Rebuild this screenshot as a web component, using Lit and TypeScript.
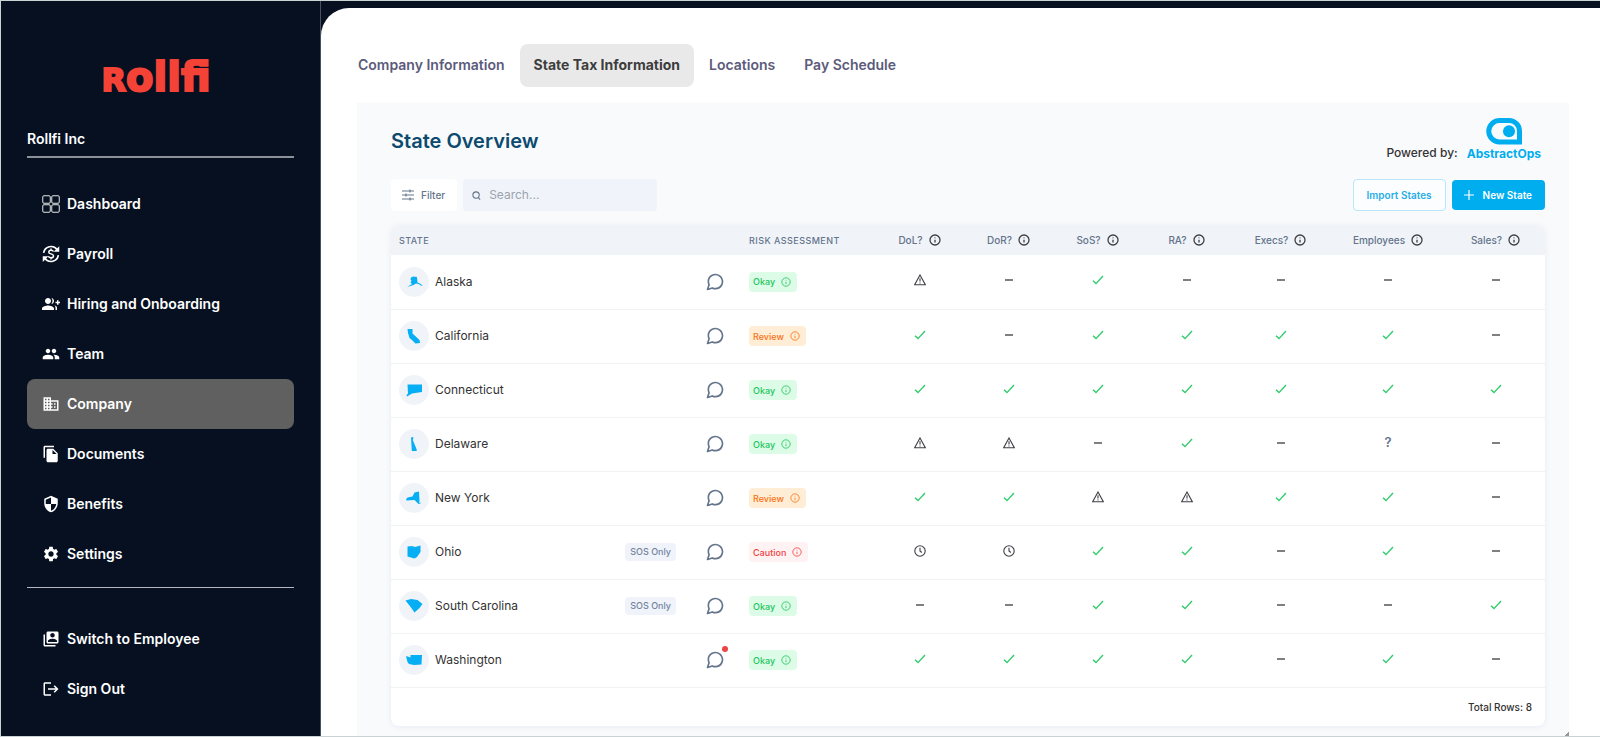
import { LitElement, html, css, svg, nothing } from "lit";
import { customElement, state } from "lit/decorators.js";

type Mark = "ok" | "none" | "warn" | "clock" | "unknown";
type Risk = "Okay" | "Review" | "Caution";

interface StateRow {
  name: string;
  shape: string;
  risk: Risk;
  marks: Mark[];
  sosOnly?: boolean;
  unread?: boolean;
}

const CODES: Record<string, Mark> = { v: "ok", "-": "none", w: "warn", c: "clock", "?": "unknown" };
const marks = (text: string): Mark[] => [...text].map((c) => CODES[c]);

/* Outlines are drawn on a 30 x 30 grid, the size of the round badge. */
const ROWS: StateRow[] = [
  { name: "Alaska", shape: "M12 10.5 14 9.5 18 10 18.5 15.5 21 16.5 23.500 18.500 23 19 19.500 17 17 16.500 14.500 18 8 20 13 17 11.500 15.500 12.500 13.500 11.500 12.500Z", risk: "Okay", marks: marks("w-v----") },
  { name: "California", shape: "M8.5 8 13.5 8 13.5 12.5 20.5 19 21 22 16.5 22.5 13.5 19.5 10.5 17 9 12Z", risk: "Review", marks: marks("v-vvvv-") },
  { name: "Connecticut", shape: "M8.5 9.5 23 9.5 23 17 13 18.5 8 21.5 7.5 20 9 18.5Z", risk: "Okay", marks: marks("vvvvvvv") },
  { name: "Delaware", shape: "M12 8.5 14.5 8 13.8 11 17.5 20 17.8 22 12.8 22Z", risk: "Okay", marks: marks("ww-v-?-") },
  { name: "New York", shape: "M7 16.5 8.5 14.5 13.5 13.5 15.5 9.5 20 8.5 20.5 18 20 19.5 22.5 20 19.5 21 15.5 17 7.5 17.5Z", risk: "Review", marks: marks("vvwwvv-") },
  { name: "Ohio", shape: "M8.5 9.5 13 9 16 10 21.5 8.5 21.5 15 18 20 15.5 21.5 8.5 19.5Z", risk: "Caution", marks: marks("ccvv-v-"), sosOnly: true },
  { name: "South Carolina", shape: "M6.5 9.5 12 8 18.5 9 23.5 13 20.5 17 15.5 21.5 12 16.5Z", risk: "Okay", marks: marks("--vv--v"), sosOnly: true },
  { name: "Washington", shape: "M7 11 11.5 12.5 11.5 10 23 10 22.5 19.5 15 20 10 19 8.5 17Z", risk: "Okay", marks: marks("vvvv-v-"), unread: true },
];

const COLUMNS = ["DoL?", "DoR?", "SoS?", "RA?", "Execs?", "Employees", "Sales?"];

const NAV_ICONS: Record<string, unknown> = {
  Dashboard: svg`<g fill="none" stroke="currentColor" stroke-width="1.2"><rect x="1" y="1" width="10" height="10" rx="1.5"/><rect x="13" y="1" width="10" height="10" rx="1.5"/><rect x="1" y="13" width="10" height="10" rx="1.5"/><rect x="13" y="13" width="10" height="10" rx="1.5"/></g>`,
  Payroll: svg`<g fill="none" stroke="currentColor" stroke-width="2.2"><path d="M2.2 10.5A10 10 0 0 1 20 6M21.8 13.500A10 10 0 0 1 4 18"/><path d="M15.300 8.800C14.800 7.600 13.500 7 12 7 10.200 7 9 8 9 9.500c0 3.200 6.300 1.600 6.300 5 0 1.500-1.300 2.500-3.300 2.500-1.700 0-3-.7-3.500-2M12 4.800V7M12 17v2.200" stroke-width="1.900"/></g><path d="M23 1.500V9h-7.500zM1 22.500V15h7.500z"/>`,
  "Hiring and Onboarding": svg`<path d="M22 9V7h-2v2h-2v2h2v2h2v-2h2V9zM8 12c2.210 0 4-1.790 4-4s-1.790-4-4-4-4 1.790-4 4 1.790 4 4 4zm0 2c-2.670 0-8 1.340-8 4v2h16v-2c0-2.660-5.330-4-8-4zm4.510-9.950C13.430 5.110 14 6.490 14 8s-.57 2.890-1.490 3.950C14.470 11.700 16 10.040 16 8s-1.530-3.700-3.490-3.950zm4.020 9.780C17.420 14.660 18 15.700 18 17v3h2v-3c0-1.450-1.590-2.510-3.470-3.170z"/>`,
  Team: svg`<path d="M16 11c1.660 0 2.990-1.340 2.990-3S17.660 5 16 5c-1.660 0-3 1.340-3 3s1.340 3 3 3zm-8 0c1.660 0 2.990-1.340 2.990-3S9.660 5 8 5C6.340 5 5 6.340 5 8s1.340 3 3 3zm0 2c-2.330 0-7 1.170-7 3.500V19h14v-2.500c0-2.330-4.670-3.500-7-3.500zm8 0c-.29 0-.62.02-.97.05 1.160.84 1.970 1.970 1.970 3.450V19h6v-2.500c0-2.330-4.670-3.500-7-3.500z"/>`,
  Company: svg`<path d="M12 7V3H2v18h20V7H12zM6 19H4v-2h2v2zm0-4H4v-2h2v2zm0-4H4V9h2v2zm0-4H4V5h2v2zm4 12H8v-2h2v2zm0-4H8v-2h2v2zm0-4H8V9h2v2zm0-4H8V5h2v2zm10 12h-8v-2h2v-2h-2v-2h2v-2h-2V9h8v10zm-2-8h-2v2h2v-2zm0 4h-2v2h2v-2z"/>`,
  Documents: svg`<path d="M16 1H4c-1.100 0-2 .9-2 2v14h2V3h12V1zm-1 4l6 6v10c0 1.100-.9 2-2 2H7.990C6.890 23 6 22.100 6 21l.01-14c0-1.100.89-2 1.990-2h7zm-1 7h5.500L14 6.500V12z"/>`,
  Benefits: svg`<path d="M12 1L3 5v6c0 5.550 3.840 10.740 9 12 5.160-1.260 9-6.450 9-12V5l-9-4zm0 10.990h7c-.53 4.120-3.280 7.790-7 8.940V12H5V6.300l7-3.110v8.800z"/>`,
  Settings: svg`<path d="M19.140 12.940c.04-.3.06-.61.06-.94 0-.32-.02-.64-.07-.94l2.030-1.580c.18-.14.23-.41.12-.61l-1.920-3.320c-.12-.22-.37-.29-.59-.22l-2.390.96c-.5-.38-1.030-.7-1.620-.94l-.36-2.540c-.04-.24-.24-.41-.48-.41h-3.840c-.24 0-.43.17-.47.41l-.36 2.540c-.59.24-1.130.57-1.620.94l-2.390-.96c-.22-.08-.47 0-.59.22L2.740 8.870c-.12.21-.08.47.12.61l2.030 1.580c-.05.3-.09.63-.09.94s.02.64.07.94l-2.030 1.580c-.18.14-.23.41-.12.61l1.920 3.320c.12.22.37.29.59.22l2.390-.96c.5.38 1.030.7 1.620.94l.36 2.540c.05.24.24.41.48.41h3.840c.24 0 .44-.17.47-.41l.36-2.540c.59-.24 1.130-.56 1.620-.94l2.390.96c.22.08.47 0 .59-.22l1.920-3.320c.12-.22.07-.47-.12-.61l-2.010-1.580zM12 15.600c-1.980 0-3.600-1.620-3.600-3.600s1.620-3.600 3.600-3.600 3.600 1.620 3.600 3.600-1.620 3.600-3.600 3.600z"/>`,
  "Switch to Employee": svg`<path d="M4 6H2v14c0 1.100.9 2 2 2h14v-2H4V6zM20 2H8c-1.100 0-2 .9-2 2v12c0 1.100.9 2 2 2h12c1.100 0 2-.9 2-2V4c0-1.100-.9-2-2-2zm-6 2c1.660 0 3 1.340 3 3s-1.340 3-3 3-3-1.340-3-3 1.340-3 3-3zm6 12H8v-1.500c0-1.990 4-3 6-3s6 1.010 6 3V16z"/>`,
  "Sign Out": svg`<path d="M17 7l-1.410 1.410L18.170 11H8v2h10.170l-2.580 2.580L17 17l5-5zM4 5h8V3H4c-1.100 0-2 .9-2 2v14c0 1.100.9 2 2 2h8v-2H4V5z"/>`,
};

const MAIN_NAV = ["Dashboard", "Payroll", "Hiring and Onboarding", "Team", "Company", "Documents", "Benefits", "Settings"];
const ACCOUNT_NAV = ["Switch to Employee", "Sign Out"];
const TABS = ["Company Information", "State Tax Information", "Locations", "Pay Schedule"];

const infoIcon = html`<svg class="info" viewBox="0 0 24 24" aria-hidden="true"><circle cx="12" cy="12" r="10"/><path d="M12 11.500V17M12 7v1.500"/></svg>`;

const MARKS: Record<Mark, unknown> = {
  ok: html`<svg class="mark ok" viewBox="0 0 12 12" role="img" aria-label="Yes"><path d="M1 6.800 4 9.600 11 2"/></svg>`,
  none: html`<svg class="mark none" viewBox="0 0 12 12" role="img" aria-label="None"><path d="M2 6H10"/></svg>`,
  warn: html`<svg class="mark warn" viewBox="0 0 12 12" role="img" aria-label="Warning"><path d="M6 1 11.300 10.700H.7ZM6 4.300V7.400M6 8.400V9.400"/></svg>`,
  clock: html`<svg class="mark warn" viewBox="0 0 12 12" role="img" aria-label="Pending"><circle cx="6" cy="6" r="5.200"/><path d="M6 2.800V6L7.800 7.500"/></svg>`,
  unknown: html`<span class="unknown">?</span>`,
};

@customElement("side-nav")
class SideNav extends LitElement {
  @state() private active = "Company";

  static styles = css`
    :host {
      display: block;
      box-sizing: border-box;
      padding: 0 26px;
      color: #fff;
      border-right: 1px solid #4a515e;
      font-family: Inter, "Liberation Sans", sans-serif;
    }
    .logo {
      margin: 0;
      padding: 54px 9px 27px 0;
      text-align: center;
      font: 700 40px/44px "DejaVu Sans", sans-serif;
      color: #f44336;
      -webkit-text-stroke: 2px #f44336;
    }
    .logo .cap { font-size: 32px; }
    .company {
      margin: 0;
      padding-bottom: 7px;
      font-size: 14px;
      line-height: 20px;
      font-weight: 600;
      border-bottom: 2px solid #8b9099;
    }
    ul { list-style: none; margin: 0; padding: 21px 0 8px; }
    ul + ul { border-top: 1px solid #b4b8be; padding-top: 26px; }
    a {
      display: flex;
      align-items: center;
      gap: 7px;
      height: 50px;
      padding: 0 15px;
      border-radius: 8px;
      color: inherit;
      text-decoration: none;
      font-size: 14px;
      line-height: 20px;
      font-weight: 600;
    }
    a.active { background: #606060; }
    svg { width: 18px; height: 18px; fill: currentColor; flex: none; }
  `;

  private item(name: string) {
    return html`<li>
      <a href="#" class=${name === this.active ? "active" : ""} @click=${() => (this.active = name)}>
        <svg viewBox="0 0 24 24" aria-hidden="true">${NAV_ICONS[name]}</svg>${name}
      </a>
    </li>`;
  }

  render() {
    return html`
      <p class="logo"><span class="cap">R</span>ollfi</p>
      <p class="company">Rollfi Inc</p>
      <ul>${MAIN_NAV.map((n) => this.item(n))}</ul>
      <ul>${ACCOUNT_NAV.map((n) => this.item(n))}</ul>
    `;
  }
}

@customElement("state-table")
class StateTable extends LitElement {
  static styles = css`
    :host {
      display: block;
      border-radius: 8px;
      overflow: hidden;
      background: #fff;
      box-shadow: 0 1px 6px #e6ebf2;
    }
    table { width: 100%; table-layout: fixed; border-collapse: collapse; }
    .c-risk { width: 134px; }
    .c-mark { width: 89px; }
    .c-wide { width: 99px; }
    .c-widest { width: 116px; }
    th, td { box-sizing: border-box; }
    th {
      height: 30px;
      padding: 0;
      background: #f0f3f8;
      color: #64748b;
      font-size: 10px;
      font-weight: 500;
    }
    th.label {
      padding: 0 8px;
      text-align: left;
      font-size: 9px;
      letter-spacing: 0.05em;
      text-transform: uppercase;
    }
    .head { display: flex; align-items: center; justify-content: center; gap: 6px; }
    .info { width: 12px; height: 12px; flex: none; fill: none; stroke: currentColor; stroke-width: 2; }
    .head .info { color: #3f3f46; stroke-width: 2.600; }
    td { height: 54px; padding: 0 8px; border-bottom: 1px solid #f0f2f6; }
    .state { display: flex; align-items: center; padding-right: 8px; }
    .badge { width: 30px; height: 30px; border-radius: 50%; background: #f0f4f9; fill: #06aef4; }
    .name { flex: 1; margin-left: 6px; font-size: 12px; line-height: 20px; color: #333; }
    .sos {
      padding: 0 5px;
      border-radius: 4px;
      background: #f0f3f9;
      color: #7384a0;
      font-size: 9px;
      line-height: 18px;
      font-weight: 500;
    }
    .chat {
      position: relative;
      display: flex;
      margin-left: 29px;
      padding: 0;
      border: 0;
      background: none;
      color: #64748b;
    }
    .chat svg { width: 20px; height: 20px; fill: none; stroke: currentColor; stroke-width: 2; stroke-linejoin: round; }
    .dot {
      position: absolute;
      top: -4px;
      right: -3px;
      width: 6px;
      height: 6px;
      border-radius: 50%;
      background: #ef4444;
    }
    .risk {
      display: flex;
      align-items: center;
      gap: 6px;
      width: fit-content;
      height: 20px;
      padding: 0 6px 0 4px;
      border-radius: 4px;
      font-size: 9px;
      font-weight: 500;
    }
    .risk .info { width: 10px; height: 10px; }
    .Okay { background: #dcfce7; color: #22c55e; }
    .Review { background: #ffedd5; color: #f97316; }
    .Caution { background: #fef2f2; color: #ef4444; }
    td.value { padding: 0 0 6px; text-align: center; }
    .mark { width: 12px; height: 12px; vertical-align: middle; fill: none; stroke-width: 1.400; }
    .ok { stroke: #2fcb6c; }
    .none { stroke: #808080; stroke-width: 2; }
    .warn { stroke: #3f3f46; stroke-width: 1.100; }
    .unknown { color: #64748b; font-size: 13px; line-height: 20px; font-weight: 600; }
    td.total { height: 39px; border: 0; padding: 0 13px; text-align: right; font-size: 10px; font-weight: 500; color: #333; }
  `;

  render() {
    return html`
      <table>
        <colgroup>
          <col />
          <col class="c-risk" />
          <col class="c-mark" span="4" />
          <col class="c-wide" />
          <col class="c-widest" />
          <col class="c-wide" />
        </colgroup>
        <thead>
          <tr>
            <th class="label" scope="col">State</th>
            <th class="label" scope="col">Risk Assessment</th>
            ${COLUMNS.map((c) => html`<th scope="col"><span class="head">${c}${infoIcon}</span></th>`)}
          </tr>
        </thead>
        <tbody>
          ${ROWS.map(
            (r) => html`<tr>
              <td>
                <div class="state">
                  <svg class="badge" viewBox="0 0 30 30" aria-hidden="true"><path d=${r.shape} /></svg>
                  <span class="name">${r.name}</span>
                  ${r.sosOnly ? html`<span class="sos">SOS Only</span>` : nothing}
                  <button class="chat" aria-label="Comments">
                    <svg viewBox="0 0 24 24"><path d="M21 11.500a8.380 8.380 0 0 1-.9 3.800 8.500 8.500 0 0 1-7.600 4.700 8.380 8.380 0 0 1-3.800-.9L3 21l1.900-5.700a8.380 8.380 0 0 1-.9-3.800 8.500 8.500 0 0 1 4.700-7.600 8.380 8.380 0 0 1 3.800-.9h.5a8.480 8.480 0 0 1 8 8v.5z" /></svg>
                    ${r.unread ? html`<span class="dot"></span>` : nothing}
                  </button>
                </div>
              </td>
              <td><span class="risk ${r.risk}">${r.risk}${infoIcon}</span></td>
              ${r.marks.map((m) => html`<td class="value">${MARKS[m]}</td>`)}
            </tr>`,
          )}
        </tbody>
        <tfoot>
          <tr><td class="total" colspan="9">Total Rows: ${ROWS.length}</td></tr>
        </tfoot>
      </table>
    `;
  }
}

@customElement("app-root")
class AppRoot extends LitElement {
  @state() private tab = "State Tax Information";

  static styles = css`
    :host {
      display: grid;
      grid-template-columns: 320px 1fr;
      box-sizing: border-box;
      min-height: 100vh;
      border: 1px solid #cbd2d3;
      border-right: 0;
      background: #061021;
      font-family: Inter, "Liberation Sans", sans-serif;
    }
    main {
      display: flex;
      flex-direction: column;
      margin-top: 7px;
      padding: 36px 31px 0 36px;
      border-top-left-radius: 28px;
      background: #fff;
    }
    .tabs { display: flex; gap: 1px; margin-left: -13px; }
    .tabs a {
      padding: 11px 14px 12px;
      border-radius: 8px;
      color: #5b5b7b;
      font-size: 14px;
      line-height: 20px;
      font-weight: 600;
      text-decoration: none;
    }
    .tabs a.active { background: #e9e9e9; color: #3d3d3d; font-weight: 700; }
    .panel {
      flex: 1;
      position: relative;
      margin-top: 16px;
      padding: 12px 24px 10px 34px;
      background: #f9fafc;
    }
    .grip {
      position: absolute;
      right: 0;
      bottom: 0;
      width: 5px;
      height: 5px;
      background: linear-gradient(135deg, transparent 50%, #999 50%);
    }
    .top { display: flex; justify-content: space-between; align-items: flex-start; }
    h1 { margin: 12px 0 0; font-size: 20px; line-height: 28px; font-weight: 600; color: #0c4a6e; }
    .powered { display: flex; align-items: flex-end; gap: 9px; padding-right: 4px; }
    .powered p { margin: 0; font-size: 12px; line-height: 20px; font-weight: 500; color: #333; }
    .brand {
      display: flex;
      flex-direction: column;
      align-items: center;
      color: #00aeef;
      font: 700 12px/18px Inter, sans-serif;
    }
    .brand svg { width: 36px; height: 27px; margin-top: 3px; }
    .tools { display: flex; align-items: center; gap: 6px; margin: 16px 0 14px; }
    button { font-family: inherit; font-size: 10px; line-height: 16px; font-weight: 500; border-radius: 4px; }
    .filter {
      display: flex;
      align-items: center;
      gap: 7px;
      height: 32px;
      padding: 0 12px 0 11px;
      border: 0;
      background: #fff;
      color: #64748b;
    }
    .filter svg { width: 12px; height: 12px; fill: none; stroke: currentColor; stroke-width: 1.200; }
    .search {
      display: flex;
      align-items: center;
      gap: 8px;
      box-sizing: border-box;
      width: 194px;
      height: 32px;
      margin-right: auto;
      padding: 0 9px;
      border-radius: 4px;
      background: #f0f3f9;
      color: #94a3b8;
    }
    .search svg { width: 9px; height: 9px; flex: none; fill: none; stroke: #64748b; stroke-width: 1.200; }
    .search input {
      flex: 1;
      min-width: 0;
      padding: 0;
      border: 0;
      outline: 0;
      background: none;
      font: 400 12px/20px Inter, sans-serif;
      color: #334155;
    }
    .search input::placeholder { color: #9ca3af; }
    .import { height: 32px; padding: 0 13px; border: 1px solid #bae6fd; background: #fbfdff; color: #28aee6; font-weight: 600; }
    .new {
      display: flex;
      align-items: center;
      gap: 9px;
      height: 30px;
      padding: 0 13px 0 12px;
      border: 0;
      background: #00aeef;
      color: #fff;
      font-weight: 600;
    }
    .new svg { width: 10px; height: 10px; stroke: currentColor; stroke-width: 1.200; }
  `;

  render() {
    return html`
      <side-nav></side-nav>
      <main>
        <nav class="tabs">
          ${TABS.map((t) => html`<a href="#" class=${t === this.tab ? "active" : ""} @click=${() => (this.tab = t)}>${t}</a>`)}
        </nav>
        <section class="panel">
          <div class="top">
            <h1>State Overview</h1>
            <div class="powered">
              <p>Powered by:</p>
              <div class="brand">
                <svg viewBox="0 0 36 27" aria-hidden="true">
                  <path d="M13.500 2.500H23A10.500 10.500 0 0 1 33.500 13V24H13.500A10.750 10.750 0 0 1 13.500 2.500Z" fill="none" stroke="currentColor" stroke-width="5" />
                  <circle cx="23" cy="13.300" r="6" fill="currentColor" />
                </svg>
                AbstractOps
              </div>
            </div>
          </div>
          <div class="tools">
            <button class="filter">
              <svg viewBox="0 0 12 12" aria-hidden="true"><path d="M0 2H12M0 6H12M0 10H12M8 .5V3.500M4 4.500V7.500M8 8.500V11.500" /></svg>
              Filter
            </button>
            <label class="search">
              <svg viewBox="0 0 10 10" aria-hidden="true"><circle cx="4.500" cy="4.500" r="3.500" /><path d="M7 7 9 9.500" /></svg>
              <input type="search" placeholder="Search..." aria-label="Search" />
            </label>
            <button class="import">Import States</button>
            <button class="new">
              <svg viewBox="0 0 10 10" aria-hidden="true"><path d="M5 0V10M0 5H10" /></svg>
              New State
            </button>
          </div>
          <state-table></state-table>
          <span class="grip"></span>
        </section>
      </main>
    `;
  }
}
